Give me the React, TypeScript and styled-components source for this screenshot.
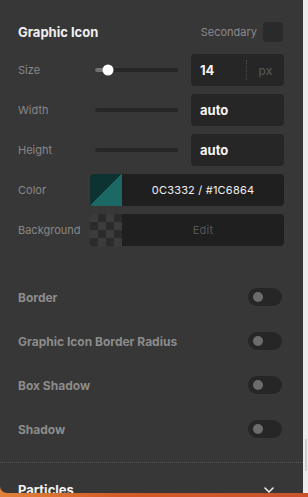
import React from "react";
import styled, { createGlobalStyle } from "styled-components";

const Global = createGlobalStyle`
  html, body { margin: 0; padding: 0; }
  body {
    width: 308px;
    height: 497px;
    overflow: hidden;
    background: linear-gradient(90deg, #e0823a 0%, #d45a26 40%, #c8522c 100%);
    font-family: Inter, "Noto Sans", "Liberation Sans", sans-serif;
    -webkit-font-smoothing: antialiased;
  }
`;

const Screen = styled.div`
  display: flex;
  height: 493px;
`;

const Panel = styled.div`
  width: 303px;
  box-sizing: border-box;
  background: #373737;
  border-bottom-left-radius: 7px;
  overflow: hidden;
  display: flex;
  flex-direction: column;
`;

const SideStrip = styled.div`
  width: 5px;
  background: #ececec;
  display: flex;
  flex-direction: column;
  justify-content: flex-end;
  padding-bottom: 22px;
  box-sizing: border-box;
`;

const ScrollThumb = styled.div`
  margin-left: 2px;
  width: 2px;
  height: 32px;
  background: #cfcfcf;
`;

const Section = styled.div`
  padding: 22px 19px 0 18px;
  display: flex;
  flex-direction: column;
`;

const TitleRow = styled.div`
  display: flex;
  align-items: center;
  justify-content: space-between;
  height: 20px;
  margin-bottom: 12px;
`;

const Title = styled.div`
  color: #efefef;
  font-weight: 700;
  font-size: 13px;
`;

const Secondary = styled.div`
  display: flex;
  align-items: center;
  gap: 6px;
  color: #8a8a8a;
  font-size: 11px;
`;

const CheckBox = styled.div`
  width: 20px;
  height: 20px;
  border-radius: 4px;
  background: #2a2a2a;
  margin-right: 1px;
`;

const Fields = styled.div`
  display: flex;
  flex-direction: column;
  gap: 8px;
`;

const FieldRow = styled.div`
  display: grid;
  grid-template-columns: 72px 1fr;
  align-items: center;
  height: 32px;
`;

const Label = styled.div`
  color: #878787;
  font-size: 11px;
`;

const Controls = styled.div`
  display: flex;
  align-items: center;
  gap: 8px;
  height: 100%;
`;

const SliderWrap = styled.div`
  flex: 1;
  padding: 0 5px;
  display: flex;
  align-items: center;
  height: 100%;
`;

const Track = styled.div`
  position: relative;
  flex: 1;
  height: 4px;
  border-radius: 2px;
  background: #262626;
`;

const Fill = styled.div`
  height: 100%;
  border-radius: 2px 0 0 2px;
  background: #707070;
`;

const Thumb = styled.div`
  position: absolute;
  top: 50%;
  width: 11px;
  height: 11px;
  border-radius: 50%;
  background: #ffffff;
  transform: translate(-50%, -50%);
`;

const InputBox = styled.div`
  width: 93px;
  height: 32px;
  box-sizing: border-box;
  border-radius: 4px;
  background: #262626;
  display: flex;
  align-items: center;
  padding-left: 9px;
  color: #f4f4f4;
  font-weight: 700;
  font-size: 13px;
`;

const InputValue = styled.div`
  flex: 1;
`;

const UnitSep = styled.div`
  align-self: center;
  height: 20px;
  border-left: 1px dotted #4a4a4a;
`;

const Unit = styled.div`
  width: 37px;
  text-align: center;
  color: #545454;
  font-weight: 500;
  font-size: 12px;
`;

const SwatchBox = styled.div`
  display: flex;
  height: 32px;
  border-radius: 4px;
  overflow: hidden;
  background: #1f1f1f;
`;

const Swatch = styled.div<{ $kind: "color" | "checker" }>`
  width: 32px;
  flex: none;
  background: ${(p) =>
    p.$kind === "color"
      ? "linear-gradient(to bottom right, #0c3332 0%, #0c3332 50%, #1c6864 50%, #1c6864 100%)"
      : "repeating-conic-gradient(#2b2b2b 0% 25%, #3c3c3c 0% 50%) 0 0 / 16px 16px"};
`;

const SwatchText = styled.div<{ $muted?: boolean }>`
  flex: 1;
  display: flex;
  align-items: center;
  justify-content: center;
  font-size: 11px;
  letter-spacing: 0.2px;
  color: ${(p) => (p.$muted ? "#555555" : "#f2f2f2")};
`;

const Toggles = styled.div`
  display: flex;
  flex-direction: column;
  padding: 29px 21px 11px 18px;
`;

const ToggleRow = styled.div`
  display: flex;
  align-items: center;
  justify-content: space-between;
  height: 44px;
`;

const ToggleLabel = styled.div`
  color: #8c8c8c;
  font-weight: 700;
  font-size: 12px;
`;

const Switch = styled.div`
  width: 34px;
  height: 18px;
  border-radius: 9px;
  background: #262626;
  display: flex;
  align-items: center;
  padding-left: 5px;
  box-sizing: border-box;
`;

const Knob = styled.div`
  width: 10px;
  height: 10px;
  border-radius: 50%;
  background: #6c6c6c;
`;

const Divider = styled.div`
  border-top: 1px dotted #5a5a5a;
`;

const Accordion = styled.div`
  display: flex;
  align-items: center;
  justify-content: space-between;
  padding: 19px 29px 0 18px;
`;

const AccordionTitle = styled.div`
  color: #f2f2f2;
  font-weight: 700;
  font-size: 13px;
`;

const sliderRows = [
  { label: "Size", value: "14", unit: "px", pct: 16 },
  { label: "Width", value: "auto" },
  { label: "Height", value: "auto" },
];

const toggles = ["Border", "Graphic Icon Border Radius", "Box Shadow", "Shadow"];

export default function App() {
  return (
    <>
      <Global />
      <Screen>
        <Panel>
          <Section>
            <TitleRow>
              <Title>Graphic Icon</Title>
              <Secondary>
                Secondary
                <CheckBox />
              </Secondary>
            </TitleRow>
            <Fields>
              {sliderRows.map((r) => (
                <FieldRow key={r.label}>
                  <Label>{r.label}</Label>
                  <Controls>
                    <SliderWrap>
                      <Track>
                        {r.pct !== undefined && (
                          <>
                            <Fill style={{ width: `${r.pct}%` }} />
                            <Thumb style={{ left: `${r.pct}%` }} />
                          </>
                        )}
                      </Track>
                    </SliderWrap>
                    <InputBox>
                      <InputValue>{r.value}</InputValue>
                      {r.unit && (
                        <>
                          <UnitSep />
                          <Unit>{r.unit}</Unit>
                        </>
                      )}
                    </InputBox>
                  </Controls>
                </FieldRow>
              ))}
              <FieldRow>
                <Label>Color</Label>
                <SwatchBox>
                  <Swatch $kind="color" />
                  <SwatchText>0C3332 / #1C6864</SwatchText>
                </SwatchBox>
              </FieldRow>
              <FieldRow>
                <Label>Background</Label>
                <SwatchBox>
                  <Swatch $kind="checker" />
                  <SwatchText $muted>Edit</SwatchText>
                </SwatchBox>
              </FieldRow>
            </Fields>
          </Section>
          <Toggles>
            {toggles.map((t) => (
              <ToggleRow key={t}>
                <ToggleLabel>{t}</ToggleLabel>
                <Switch>
                  <Knob />
                </Switch>
              </ToggleRow>
            ))}
          </Toggles>
          <Divider />
          <Accordion>
            <AccordionTitle>Particles</AccordionTitle>
            <svg width="10" height="6" viewBox="0 0 10 6" fill="none">
              <path d="M1 1l4 4 4-4" stroke="#f2f2f2" strokeWidth="1.5" strokeLinecap="round" strokeLinejoin="round" />
            </svg>
          </Accordion>
        </Panel>
        <SideStrip>
          <ScrollThumb />
        </SideStrip>
      </Screen>
    </>
  );
}
